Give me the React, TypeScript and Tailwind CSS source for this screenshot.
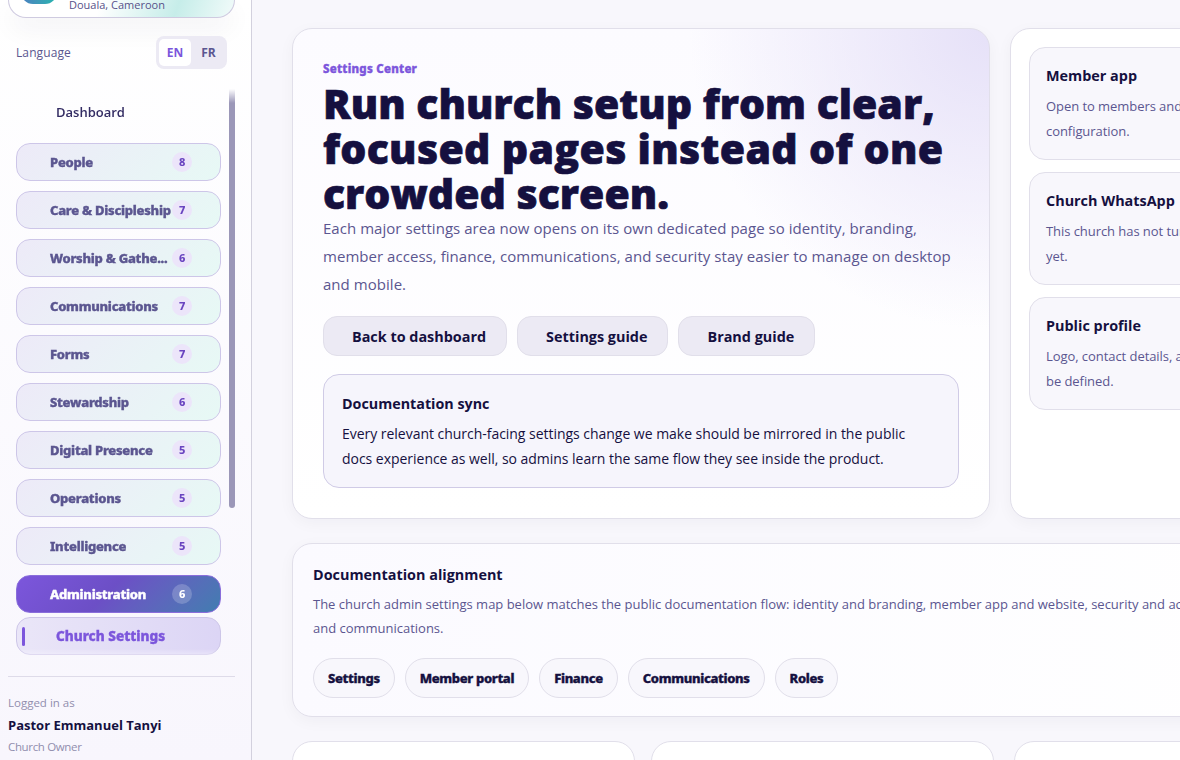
const navGroups = [
  { label: "People", count: 8 },
  { label: "Care & Discipleship", count: 7 },
  { label: "Worship & Gathe...", count: 6 },
  { label: "Communications", count: 7 },
  { label: "Forms", count: 7 },
  { label: "Stewardship", count: 6 },
  { label: "Digital Presence", count: 5 },
  { label: "Operations", count: 5 },
  { label: "Intelligence", count: 5 },
];

const statusCards = [
  { title: "Member app", lines: ["Open to members and visitors", "configuration."] },
  { title: "Church WhatsApp", lines: ["This church has not turned on", "yet."] },
  { title: "Public profile", lines: ["Logo, contact details, and", "be defined."] },
];

const docLinks = ["Settings", "Member portal", "Finance", "Communications", "Roles"];

const actions = ["Back to dashboard", "Settings guide", "Brand guide"];

function Sidebar() {
  return (
    <aside className="flex h-full w-[252px] shrink-0 flex-col border-r border-[#d3d1de] bg-linear-to-b from-white to-[#f8f6fd] pl-2 pr-4">
      <div className="flex h-[18px] items-end overflow-hidden rounded-b-[18px] border border-t-0 border-[#cfcbe0] bg-[linear-gradient(110deg,#ffffff_40%,#c6ede9_74%,#f2fbfa)] pl-3 shadow-[0_12px_24px_rgba(20,14,60,0.05)]">
        <div className="mb-[13px] h-8 w-9 shrink-0 rounded-xl bg-linear-to-r from-[#4a7fc0] to-[#22b5ae]" />
        <p className="mb-1 ml-3 whitespace-nowrap text-[11px] leading-[16px] text-[#57528a]">Douala, Cameroon</p>
      </div>

      <div className="mt-[18px] flex items-center justify-between pl-2 pr-2">
        <span className="pt-px text-[12px] font-medium tracking-[0.1px] text-[#5b5690]">Language</span>
        <div className="flex h-[33px] w-[71px] rounded-lg bg-[#eceaf4] p-[3px] text-[12px] font-bold">
          <span className="flex w-8 items-center justify-center rounded-[5px] bg-white text-[#7c56dc]">EN</span>
          <span className="flex flex-1 items-center justify-center pl-[2px] text-[#5b5690]">FR</span>
        </div>
      </div>

      <div className="mt-5 flex h-[574px] justify-between pl-2 [mask-image:linear-gradient(to_bottom,transparent,black_14px,black_calc(100%-14px),transparent)]">
        <nav className="w-[205px]">
          <a className="flex h-[46px] items-center pl-10 pt-[2px] text-[13px] font-semibold text-[#332c63]">Dashboard</a>
          <div className="mt-2 flex flex-col gap-[10px] font-['Noto_Sans',sans-serif] tracking-[-0.25px]">
            {navGroups.map(({ label, count }) => (
              <a
                key={label}
                className="flex h-[38px] items-center rounded-[14px] border border-[#cdc6e8] bg-linear-135 from-[#edeaf8] to-[#e7f9f5] pl-[33px] text-[13px] font-extrabold text-[#5b5690]"
              >
                <span className="w-[122px] whitespace-nowrap pt-px [-webkit-text-stroke:0.4px]">{label}</span>
                <span className="flex size-5 items-center justify-center rounded-full bg-[#ece5fa] text-[11px] text-[#6a45c0]">{count}</span>
              </a>
            ))}
            <a className="flex h-[38px] items-center rounded-[14px] border border-[#8a6edb] bg-linear-135 from-[#7c56dc] via-[#6c4fc6] via-45% to-[#407db0] pl-[33px] text-[13px] font-extrabold text-white">
              <span className="w-[122px] pt-px [-webkit-text-stroke:0.4px]">Administration</span>
              <span className="flex size-5 items-center justify-center rounded-full bg-white/20 text-[11px]">6</span>
            </a>
          </div>
          <a className="mt-1 flex h-[38px] items-center rounded-[14px] border border-[#cdc6e8] bg-linear-to-r from-[#eae6f8] to-[#dcd5f5] pl-[5px] font-['Noto_Sans',sans-serif] text-[13.6px] font-extrabold text-[#7c56dc]">
            <span className="h-[19px] w-[3px] rounded-full bg-[#7c56dc]" />
            <span className="ml-[31px] pt-px [-webkit-text-stroke:0.4px]">Church Settings</span>
          </a>
        </nav>
        <div className="h-[419px] w-[6px] rounded-b-full bg-[#9b97b8]" />
      </div>

      <div className="mt-[13px] border-t border-[#dedbe9] pt-[15px] text-[11.5px] text-[#918eae]">
        <p className="leading-[22px]">Logged in as</p>
        <p className="text-[13px] font-bold leading-[22px] text-[#15103f]">Pastor Emmanuel Tanyi</p>
        <p className="leading-[22px] tracking-[-0.03em]">Church Owner</p>
      </div>
    </aside>
  );
}

function Hero() {
  return (
    <section className="h-[491px] w-[698px] shrink-0 rounded-[20px] border border-[#e1dfea] bg-white bg-[radial-gradient(circle_at_top_right,#e6e1f8_0%,transparent_300px),linear-gradient(to_bottom,#fcfbff,#ffffff)] px-[30px] pt-[30px] shadow-[0_4px_16px_rgba(20,14,60,0.04)]">
      <p className="font-['Noto_Sans',sans-serif] text-[11.5px] font-extrabold leading-[20px] tracking-[0.25px] text-[#7c56dc] [-webkit-text-stroke:0.4px]">
        Settings Center
      </p>
      <h1 className="mt-[2px] whitespace-nowrap text-[41px] font-extrabold leading-[45px] text-[#15103f] [-webkit-text-stroke:0.7px]">
        Run church setup from clear,
        <br />
        <span className="tracking-[0.32px]">focused pages instead of one</span>
        <br />
        crowded screen.
      </h1>
      <p className="-mt-[2px] whitespace-nowrap text-[15px] leading-[28px] tracking-[0.04px] text-[#5b5690]">
        Each major settings area now opens on its own dedicated page so identity, branding,
        <br />
        member access, finance, communications, and security stay easier to manage on desktop
        <br />
        and mobile.
      </p>
      <div className="mt-[18px] flex gap-[10px]">
        {actions.map((label) => (
          <a key={label} className="flex h-10 items-center whitespace-nowrap rounded-[14px] border border-[#e1dfea] bg-[#eceaf4] pl-7 pr-5 pt-px text-[14.4px] font-bold text-[#15103f]">
            {label}
          </a>
        ))}
      </div>
      <div className="mt-[18px] h-[114px] rounded-2xl border border-[#d0cbe6] bg-[#f6f5fc] px-[18px] pt-[16px] text-[#15103f]">
        <h3 className="text-[14.3px] font-bold leading-[26px]">Documentation sync</h3>
        <p className="mt-[4px] whitespace-nowrap text-[14px] leading-[25px] tracking-[-0.03px]">
          Every relevant church-facing settings change we make should be mirrored in the public
          <br />
          docs experience as well, so admins learn the same flow they see inside the product.
        </p>
      </div>
    </section>
  );
}

function StatusPanel() {
  return (
    <section className="flex h-[491px] w-[340px] shrink-0 flex-col gap-3 rounded-[20px] border border-[#e1dfea] bg-white p-[18px] shadow-[0_4px_16px_rgba(20,14,60,0.04)]">
      {statusCards.map(({ title, lines }) => (
        <div key={title} className="h-[113px] rounded-2xl border border-[#e1dfea] bg-[#f8f7fc] px-4 pt-[15px]">
          <h3 className="text-[14.4px] font-bold leading-[26px] text-[#15103f]">{title}</h3>
          <p className="mt-[5px] whitespace-nowrap text-[13px] leading-[25px] tracking-[-0.06px] text-[#5b5690]">
            {lines[0]}
            <br />
            {lines[1]}
          </p>
        </div>
      ))}
    </section>
  );
}

export default function App() {
  return (
    <div className="flex h-[760px] w-[1180px] overflow-hidden bg-[#f8f7fc] font-['Open_Sans',sans-serif]">
      <Sidebar />
      <main className="w-[928px] overflow-hidden pl-10 pt-7">
        <div className="flex gap-5">
          <Hero />
          <StatusPanel />
        </div>
        <section className="mt-6 h-[174px] w-[1060px] rounded-[20px] border border-[#e1dfea] bg-linear-to-r from-[#fbfaff] to-white pl-5 pt-[18px] shadow-[0_4px_16px_rgba(20,14,60,0.04)]">
          <h3 className="text-[14.4px] font-bold leading-[26px] text-[#15103f]">Documentation alignment</h3>
          <p className="mt-[4px] whitespace-nowrap text-[13px] leading-[24px] tracking-[-0.01px] text-[#5b5690]">
            The church admin settings map below matches the public documentation flow: identity and branding, member app and website, security and access,
            <br />
            and communications.
          </p>
          <div className="mt-[18px] flex gap-[10px]">
            {docLinks.map((label) => (
              <a
                key={label}
                className="flex h-10 items-center whitespace-nowrap rounded-full border border-[#e1dfea] bg-[#f8f7fc] px-[14px] pt-px font-['Noto_Sans',sans-serif] text-[13px] font-extrabold tracking-[-0.33px] text-[#15103f] [-webkit-text-stroke:0.4px]"
              >
                {label}
              </a>
            ))}
          </div>
        </section>
        <div className="mt-6 flex">
          <div className="h-40 w-[343px] shrink-0 rounded-[20px] border border-[#e1dfea] bg-white" />
          <div className="ml-4 h-40 w-[343px] shrink-0 rounded-[20px] border border-[#e1dfea] bg-white" />
          <div className="ml-5 h-40 w-[343px] shrink-0 rounded-[20px] border border-[#e1dfea] bg-white" />
        </div>
      </main>
    </div>
  );
}
